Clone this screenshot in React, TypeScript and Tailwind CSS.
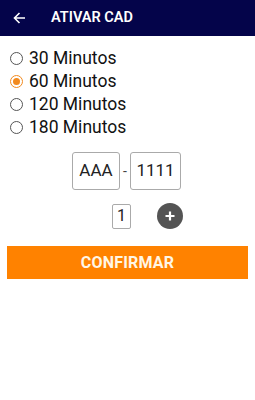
import { useState } from 'react';

const OPTIONS = ['30 Minutos', '60 Minutos', '120 Minutos', '180 Minutos'];

function Radio({ checked }: { checked: boolean }) {
  return checked ? (
    <span className="w-[13px] h-[13px] rounded-full border-[1.5px] border-[#f28a1e] flex items-center justify-center shrink-0">
      <span className="w-[7px] h-[7px] rounded-full bg-[#f28a1e]" />
    </span>
  ) : (
    <span className="w-[13px] h-[13px] rounded-full border border-[#555] shrink-0" />
  );
}

export default function App() {
  const [selected, setSelected] = useState(1);

  return (
    <div className="w-[255px] h-[400px] bg-white font-['Roboto',sans-serif]">
      <div className="h-[36px] bg-[#04044a] flex items-center">
        <svg className="ml-[13px]" width="13" height="12" viewBox="0 0 13 12" fill="none" stroke="white" strokeWidth="1.6">
          <path d="M12 6H1.5M6.5 1L1.5 6l5 5" />
        </svg>
        <span className="ml-[25px] text-white font-semibold text-[14.5px]">ATIVAR CAD</span>
      </div>

      <div className="pt-[11px] pl-[10px] flex flex-col">
        {OPTIONS.map((label, i) => (
          <button
            key={label}
            onClick={() => setSelected(i)}
            className="h-[23px] flex items-center gap-[6px] text-left"
          >
            <Radio checked={selected === i} />
            <span className="text-[17.5px] text-[#111]">{label}</span>
          </button>
        ))}
      </div>

      <div className="mt-[13px] flex items-center pl-[72px]">
        <div className="w-[48px] h-[38px] border border-[#aaa] rounded-[3px] flex items-center justify-center text-[17px] text-[#222]">
          AAA
        </div>
        <span className="w-[10px] text-center text-[14px] text-[#444]">-</span>
        <div className="w-[51px] h-[38px] border border-[#aaa] rounded-[3px] flex items-center justify-center text-[17px] text-[#222]">
          1111
        </div>
      </div>

      <div className="mt-[13px] flex items-center">
        <div className="ml-[112px] w-[19px] h-[25px] border border-[#aaa] rounded-[2px] flex items-center justify-center text-[16px] text-[#222]">
          1
        </div>
        <div className="ml-[26px] w-[26px] h-[26px] rounded-full bg-[#545454] flex items-center justify-center">
          <svg width="10" height="10" viewBox="0 0 10 10" stroke="white" strokeWidth="2.2">
            <path d="M5 0.5v9M0.5 5h9" />
          </svg>
        </div>
      </div>

      <div className="mt-[17px] mx-[7px]">
        <button className="w-full h-[33px] bg-[#ff8200] text-[#fff6e6] font-bold text-[16px] tracking-[0.2px]">
          CONFIRMAR
        </button>
      </div>
    </div>
  );
}
